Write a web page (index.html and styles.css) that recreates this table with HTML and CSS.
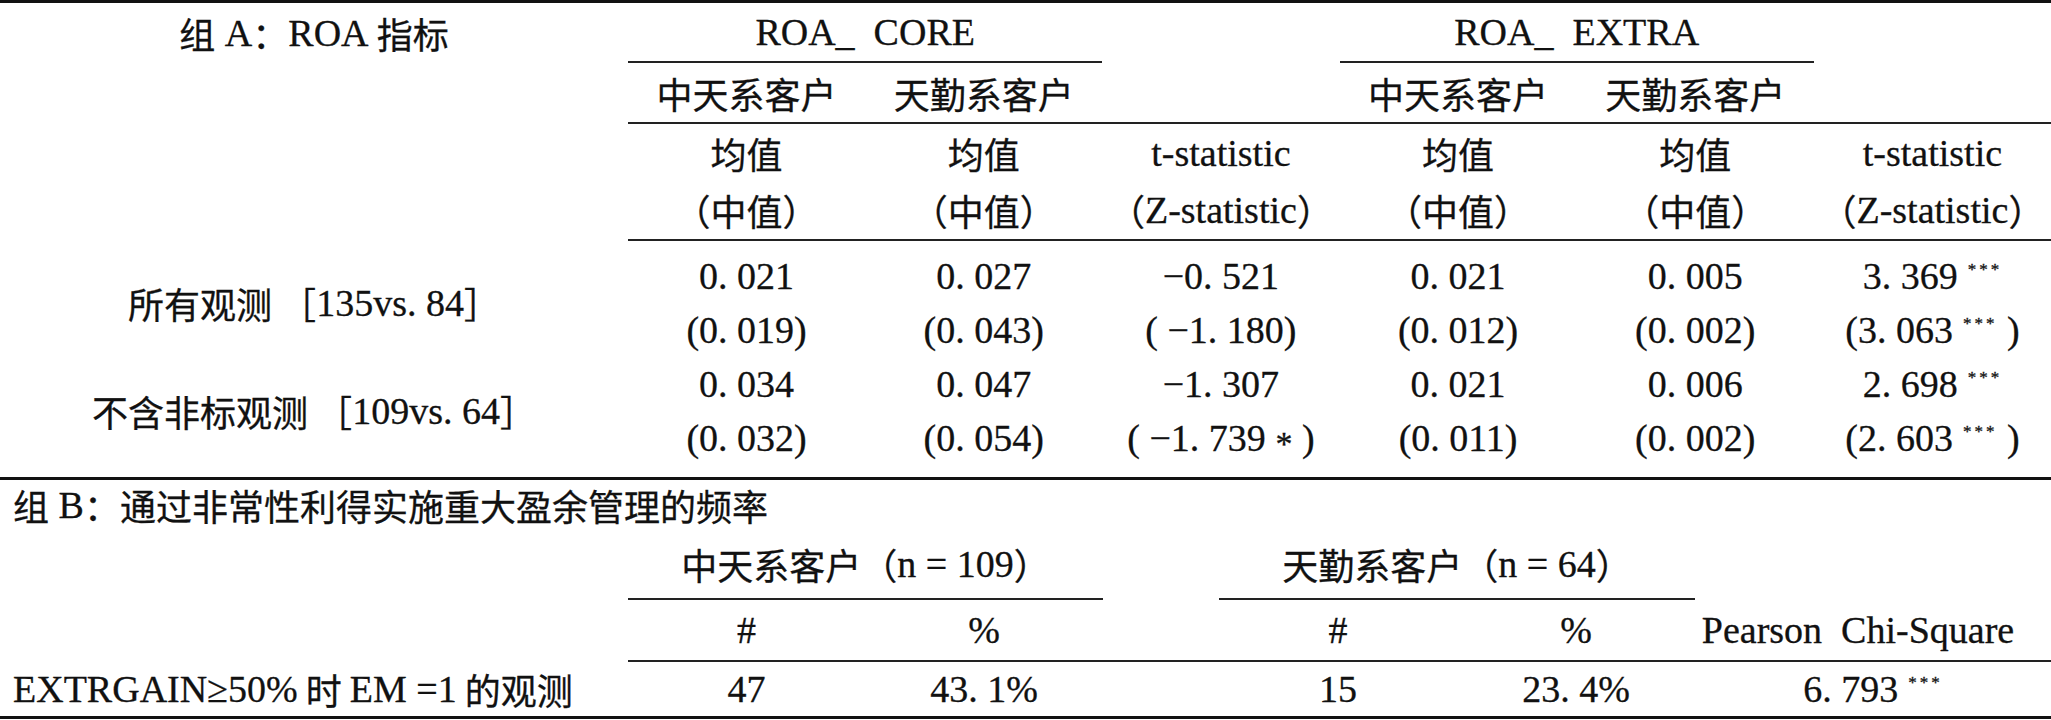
FILE: index.html
```html
<!DOCTYPE html>
<html lang="zh-CN">
<head>
<meta charset="utf-8">
<title>ROA 指标与非常性利得盈余管理</title>
<link rel="stylesheet" href="styles.css">
</head>
<body>
<div class="sheet">
  <div class="panel-a">
    <!-- header row 1 -->
    <div class="c"><span class="zh">组</span>&nbsp;A<span class="zh">：</span>ROA<span class="zh">&nbsp;指标</span></div>
    <div class="c span2 rule">ROA_&nbsp; CORE</div>
    <div class="c"></div>
    <div class="c span2 rule">ROA_&nbsp; EXTRA</div>
    <div class="c"></div>
    <!-- header row 2 -->
    <div class="c"></div>
    <div class="c rule zh">中天系客户</div>
    <div class="c rule zh">天勤系客户</div>
    <div class="c rule"></div>
    <div class="c rule zh">中天系客户</div>
    <div class="c rule zh">天勤系客户</div>
    <div class="c rule"></div>
    <!-- header row 3 -->
    <div class="c"></div>
    <div class="c zh">均值</div>
    <div class="c zh">均值</div>
    <div class="c">t-statistic</div>
    <div class="c zh">均值</div>
    <div class="c zh">均值</div>
    <div class="c">t-statistic</div>
    <!-- header row 4 -->
    <div class="c"></div>
    <div class="c rule zh">（中值）</div>
    <div class="c rule zh">（中值）</div>
    <div class="c rule"><span class="zh">（</span>Z-statistic<span class="zh">）</span></div>
    <div class="c rule zh">（中值）</div>
    <div class="c rule zh">（中值）</div>
    <div class="c rule"><span class="zh">（</span>Z-statistic<span class="zh">）</span></div>
    <!-- data block 1 -->
    <div class="c rows2 first"><span class="zh">所有观测&nbsp;［</span>135vs. 84<span class="zh">］</span></div>
    <div class="c first">0. 021</div>
    <div class="c first">0. 027</div>
    <div class="c first">−0. 521</div>
    <div class="c first">0. 021</div>
    <div class="c first">0. 005</div>
    <div class="c first">3. 369<sup class="sig">***</sup></div>
    <div class="c">(0. 019)</div>
    <div class="c">(0. 043)</div>
    <div class="c">( −1. 180)</div>
    <div class="c">(0. 012)</div>
    <div class="c">(0. 002)</div>
    <div class="c">(3. 063<sup class="sig">***</sup>&nbsp;)</div>
    <!-- data block 2 -->
    <div class="c rows2 last"><span class="zh">不含非标观测&nbsp;［</span>109vs. 64<span class="zh">］</span></div>
    <div class="c">0. 034</div>
    <div class="c">0. 047</div>
    <div class="c">−1. 307</div>
    <div class="c">0. 021</div>
    <div class="c">0. 006</div>
    <div class="c">2. 698<sup class="sig">***</sup></div>
    <div class="c last">(0. 032)</div>
    <div class="c last">(0. 054)</div>
    <div class="c last">( −1. 739&nbsp;<span class="star">*</span>&nbsp;)</div>
    <div class="c last">(0. 011)</div>
    <div class="c last">(0. 002)</div>
    <div class="c last">(2. 603<sup class="sig">***</sup>&nbsp;)</div>
  </div>

  <div class="panel-b">
    <div class="c title"><span class="zh">组</span>&nbsp;B<span class="zh">：通过非常性利得实施重大盈余管理的频率</span></div>
    <!-- group header -->
    <div class="c"></div>
    <div class="c span2 rule"><span class="zh">中天系客户（</span>n = 109<span class="zh">）</span></div>
    <div class="c"></div>
    <div class="c span2 rule"><span class="zh">天勤系客户（</span>n = 64<span class="zh">）</span></div>
    <div class="c"></div>
    <!-- sub header -->
    <div class="c"></div>
    <div class="c rule">#</div>
    <div class="c rule">%</div>
    <div class="c rule"></div>
    <div class="c rule">#</div>
    <div class="c rule">%</div>
    <div class="c rule pearson">Pearson&nbsp; Chi-Square</div>
    <!-- data -->
    <div class="c left">EXTRGAIN≥50%<span class="zh">&nbsp;时&nbsp;</span>EM =1<span class="zh">&nbsp;的观测</span></div>
    <div class="c">47</div>
    <div class="c">43. 1%</div>
    <div class="c"></div>
    <div class="c">15</div>
    <div class="c">23. 4%</div>
    <div class="c">6. 793<sup class="sig">***</sup></div>
  </div>
</div>
</body>
</html>
```

FILE: styles.css
```css
html, body {
  margin: 0;
  padding: 0;
  background: #ffffff;
}

body {
  font-family: "Liberation Serif", "Noto Sans CJK SC", serif;
  font-size: 38px;
  color: #111111;
  -webkit-text-stroke: 0.3px #111111;
}

.zh {
  font-family: "Noto Sans CJK SC", "Liberation Serif", sans-serif;
  font-size: 36px;
}

.sheet {
  width: 2051px;
}

.panel-a {
  display: grid;
  grid-template-columns: 628px repeat(6, 1fr);
  grid-template-rows: 60px 61px 57px 60px 62px 54px 54px 66px;
  border-top: 3px solid #111;
  border-bottom: 3px solid #111;
}

.panel-b {
  display: grid;
  grid-template-columns: 628px 237px 238px 116px 238px 238px 1fr;
  grid-template-rows: 50px 70px 62px 54px;
  border-bottom: 3px solid #111;
}

.c {
  box-sizing: border-box;
  display: flex;
  align-items: center;
  justify-content: center;
  white-space: pre;
  line-height: 1;
}

.span2 {
  grid-column: span 2;
}

.rows2 {
  grid-row: span 2;
}

.rule {
  border-bottom: 2px solid #222;
}

.first {
  padding-top: 8px;
}

.last {
  padding-bottom: 12px;
}

.title {
  grid-column: 1 / -1;
  justify-content: flex-start;
  padding-left: 13px;
}

.left {
  justify-content: flex-start;
  padding-left: 13px;
}

.pearson {
  padding-right: 30px;
}

.sig {
  font-size: 17px;
  line-height: 1;
  letter-spacing: 3px;
  align-self: flex-start;
  margin-top: 12px;
  margin-left: 10px;
}

.star {
  font-size: 34px;
  line-height: 1;
  align-self: center;
  padding-top: 12px;
}
```
